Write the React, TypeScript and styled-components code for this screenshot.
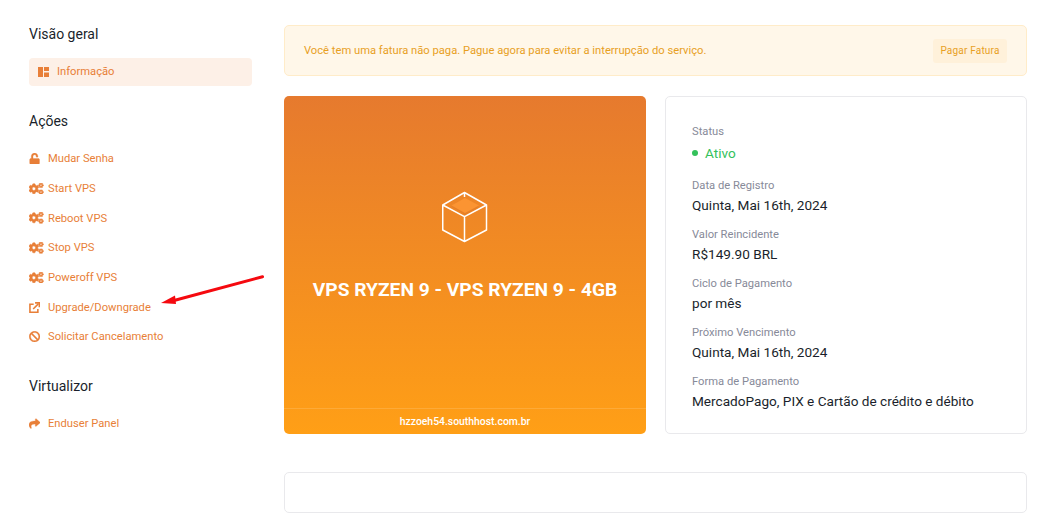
import styled, { createGlobalStyle } from 'styled-components';
import type { ReactNode } from 'react';
import { FaBan, FaCogs, FaShare, FaUnlock } from 'react-icons/fa';

const GlobalStyle = createGlobalStyle`
  html, body {
    margin: 0;
    padding: 0;
    background: #fff;
    font-family: Roboto, "Liberation Sans", sans-serif;
  }
  * { box-sizing: border-box; }
`;

const Page = styled.div`
  position: relative;
  width: 1061px;
  height: 518px;
  overflow: hidden;
  padding: 25px 34px 0 29px;
  display: grid;
  grid-template-columns: 223px 743px;
  column-gap: 32px;
`;

const Sidebar = styled.aside`
  display: flex;
  flex-direction: column;
`;

const SectionTitle = styled.h4`
  margin: 0;
  height: 18px;
  line-height: 18px;
  font-size: 14px;
  font-weight: 400;
  color: #1a1f2b;
`;

const Section = styled.section`
  display: flex;
  flex-direction: column;
  margin-bottom: 26px;
  & + & {
    margin-bottom: 25px;
  }
`;

const NavList = styled.nav`
  display: flex;
  flex-direction: column;
  margin-top: 15px;
`;

const ActionList = styled(NavList)`
  margin-top: 14px;
`;

const ActiveItem = styled.a`
  display: flex;
  align-items: center;
  height: 28px;
  padding: 0 0 1px 9px;
  border-radius: 4px;
  background: #fdf0e7;
  color: #e87f38;
  font-size: 11.2px;
  svg {
    width: 11px;
    height: 10px;
    margin-right: 8px;
  }
`;

const NavItem = styled.a`
  display: flex;
  align-items: center;
  height: 29.67px;
  color: #e87f38;
  font-size: 11.2px;
`;

const NavIcon = styled.span`
  display: flex;
  align-items: center;
  width: 19px;
  font-size: 11.2px;
  svg {
    flex: none;
    width: auto;
    height: 11.2px;
    stroke-width: 14px;
  }
`;

const CogsIcon = styled(FaCogs)`
  && {
    width: 14.5px;
    height: 11.6px;
    stroke-width: 20px;
  }
`;

const Main = styled.main`
  display: flex;
  flex-direction: column;
`;

const Alert = styled.div`
  display: flex;
  align-items: center;
  justify-content: space-between;
  height: 51px;
  padding: 0 19px 0 19px;
  border: 1px solid #ffecc9;
  border-radius: 5px;
  background: #fff7e9;
  color: #e8a01f;
  font-size: 11.2px;
`;

const AlertButton = styled.button`
  width: 74px;
  height: 24px;
  padding: 0;
  border: 0;
  border-radius: 3px;
  background: #fff1da;
  color: #e8a01f;
  font-family: inherit;
  font-size: 10px;
  letter-spacing: 0.2px;
`;

const Cards = styled.div`
  display: grid;
  grid-template-columns: 362px 362px;
  column-gap: 19px;
  margin-top: 20px;
  height: 338px;
`;

const ProductCard = styled.div`
  display: flex;
  flex-direction: column;
  border-radius: 5px;
  overflow: hidden;
  color: #fff;
  background: linear-gradient(180deg, #e67a2e 0%, #ff9f16 100%);
`;

const ProductBody = styled.div`
  flex: 1;
  display: flex;
  flex-direction: column;
  align-items: center;
  padding-top: 95px;
`;

const CubeIcon = styled.svg`
  width: 46px;
  height: 52px;
  display: block;
`;

const ProductTitle = styled.h3`
  margin: 35px 0 0;
  font-size: 19.2px;
  line-height: 24px;
  font-weight: 700;
`;

const ProductFooter = styled.div`
  height: 26px;
  line-height: 26px;
  border-top: 1px solid rgba(255, 255, 255, 0.14);
  text-align: center;
  font-size: 10.4px;
  font-weight: 500;
`;

const InfoCard = styled.div`
  display: flex;
  flex-direction: column;
  padding: 28px 26px 0;
  border: 1px solid #e9e9ec;
  border-radius: 5px;
  background: #fff;
`;

const InfoRow = styled.div`
  display: flex;
  flex-direction: column;
  height: 49px;
`;

const StatusRow = styled(InfoRow)`
  height: 54px;
`;

const InfoLabel = styled.span`
  font-size: 11.2px;
  line-height: 14px;
  color: #878a99;
`;

const InfoValue = styled.span`
  margin-top: 2px;
  font-size: 13.6px;
  line-height: 20px;
  color: #1a1f2b;
`;

const StatusValue = styled.span`
  display: flex;
  align-items: center;
  margin-top: 4px;
  font-size: 13.6px;
  line-height: 20px;
  color: #34c15b;
`;

const StatusDot = styled.span`
  width: 6px;
  height: 6px;
  margin-right: 7px;
  border-radius: 50%;
  background: #34c15b;
`;

const EmptyCard = styled.div`
  height: 41px;
  margin-top: 38px;
  border: 1px solid #e9e9ec;
  border-radius: 5px;
`;

const ArrowOverlay = styled.svg`
  position: absolute;
  left: 160px;
  top: 272px;
  width: 106px;
  height: 36px;
`;

const UpgradeIcon = () => (
  <svg viewBox="0 0 12 12" fill="none" stroke="currentColor">
    <path d="M5 2.5H1v8.5h8.5V7.5" strokeWidth="1.7" />
    <path d="M4.5 7.5 10 2" strokeWidth="1.7" />
    <path d="M6.5 .9H11.1V5.5" strokeWidth="1.7" />
  </svg>
);

const actions: { label: string; icon: ReactNode }[] = [
  { label: 'Mudar Senha', icon: <FaUnlock /> },
  { label: 'Start VPS', icon: <CogsIcon /> },
  { label: 'Reboot VPS', icon: <CogsIcon /> },
  { label: 'Stop VPS', icon: <CogsIcon /> },
  { label: 'Poweroff VPS', icon: <CogsIcon /> },
  { label: 'Upgrade/Downgrade', icon: <UpgradeIcon /> },
  { label: 'Solicitar Cancelamento', icon: <FaBan /> },
];

const details = [
  { label: 'Data de Registro', value: 'Quinta, Mai 16th, 2024' },
  { label: 'Valor Reincidente', value: 'R$149.90 BRL' },
  { label: 'Ciclo de Pagamento', value: 'por mês' },
  { label: 'Próximo Vencimento', value: 'Quinta, Mai 16th, 2024' },
  { label: 'Forma de Pagamento', value: 'MercadoPago, PIX e Cartão de crédito e débito' },
];

const App = () => {
  return (
    <Page>
      <GlobalStyle />
      <Sidebar>
        <Section>
          <SectionTitle>Visão geral</SectionTitle>
          <NavList>
            <ActiveItem>
              <svg viewBox="0 0 11 10" fill="currentColor">
                <path d="M0 0h5v10H0zM6 0h5v4H6zM6 5.5h5V10H6z" />
              </svg>
              Informação
            </ActiveItem>
          </NavList>
        </Section>
        <Section>
          <SectionTitle>Ações</SectionTitle>
          <ActionList>
            {actions.map(({ label, icon }) => (
              <NavItem key={label}>
                <NavIcon>{icon}</NavIcon>
                {label}
              </NavItem>
            ))}
          </ActionList>
        </Section>
        <Section>
          <SectionTitle>Virtualizor</SectionTitle>
          <ActionList>
            <NavItem>
              <NavIcon>
                <FaShare />
              </NavIcon>
              Enduser Panel
            </NavItem>
          </ActionList>
        </Section>
      </Sidebar>
      <Main>
        <Alert>
          <span>Você tem uma fatura não paga. Pague agora para evitar a interrupção do serviço.</span>
          <AlertButton>Pagar Fatura</AlertButton>
        </Alert>
        <Cards>
          <ProductCard>
            <ProductBody>
              <CubeIcon viewBox="0 0 46 52" fill="none">
                <path d="M9.5 15.5 23 8l14 8-14 8z" fill="#e67f28" />
                <path d="M9.5 14.5 23 7l14 7.5L23 22z" fill="#fb9432" />
                <path
                  d="M22.5 1.5 44.5 14V39L22.5 50.5 .75 39V14zM.75 14 22.5 25.7 44.5 14M22.5 25.7V50.5M22.5 1.5V6"
                  stroke="#fff"
                  strokeWidth="1.5"
                  strokeLinejoin="round"
                />
              </CubeIcon>
              <ProductTitle>VPS RYZEN 9 - VPS RYZEN 9 - 4GB</ProductTitle>
            </ProductBody>
            <ProductFooter>hzzoeh54.southhost.com.br</ProductFooter>
          </ProductCard>
          <InfoCard>
            <StatusRow>
              <InfoLabel>Status</InfoLabel>
              <StatusValue>
                <StatusDot />
                Ativo
              </StatusValue>
            </StatusRow>
            {details.map(({ label, value }) => (
              <InfoRow key={label}>
                <InfoLabel>{label}</InfoLabel>
                <InfoValue>{value}</InfoValue>
              </InfoRow>
            ))}
          </InfoCard>
        </Cards>
        <EmptyCard />
      </Main>
      <ArrowOverlay viewBox="0 0 106 36">
        <path d="M102.5 4.7 14 28.5" stroke="#f5090f" strokeWidth="3" strokeLinecap="round" />
        <path d="M1 31 15 23.5 16 32z" fill="#f5090f" />
      </ArrowOverlay>
    </Page>
  );
};

export default App;
